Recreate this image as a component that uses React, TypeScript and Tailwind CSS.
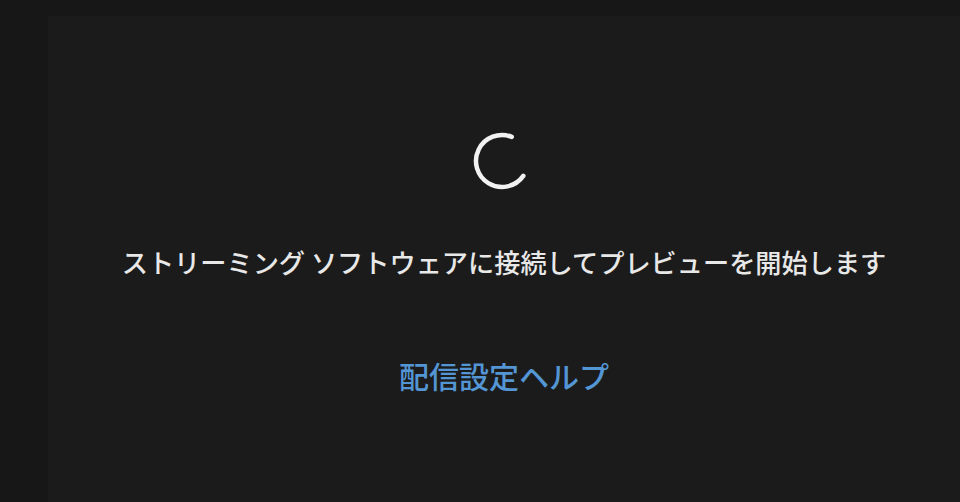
import React from 'react';

const jp = '"Noto Sans CJK JP", "Noto Sans", sans-serif';

function Spinner() {
  // open ring, gap on the right side
  const cx = 30;
  const cy = 30;
  const r = 26;
  const a1 = (-68 * Math.PI) / 180;
  const a2 = (35 * Math.PI) / 180;
  const x1 = cx + r * Math.cos(a1);
  const y1 = cy + r * Math.sin(a1);
  const x2 = cx + r * Math.cos(a2);
  const y2 = cy + r * Math.sin(a2);
  return (
    <svg width="60" height="60" viewBox="0 0 60 60" fill="none">
      <path
        d={`M ${x1} ${y1} A ${r} ${r} 0 1 0 ${x2} ${y2}`}
        stroke="#f2f2f2"
        strokeWidth="4.5"
        strokeLinecap="round"
      />
    </svg>
  );
}

export default function App() {
  return (
    <div className="w-[960px] h-[502px] bg-[#171717] pl-[48px] pt-[16px] overflow-hidden">
      <div className="h-full bg-[#1b1b1b] flex flex-col items-center" style={{ fontFamily: jp }}>
        <div className="mt-[115px] mr-[4px]">
          <Spinner />
        </div>
        <p className="mt-[54px] text-[26.2px] leading-[34px] font-medium text-[#e8e8e8]">
          ストリーミング ソフトウェアに接続してプレビューを開始します
        </p>
        <a className="mt-[77px] text-[30px] leading-[38px] font-medium text-[#5495d4] cursor-pointer">
          配信設定ヘルプ
        </a>
      </div>
    </div>
  );
}
